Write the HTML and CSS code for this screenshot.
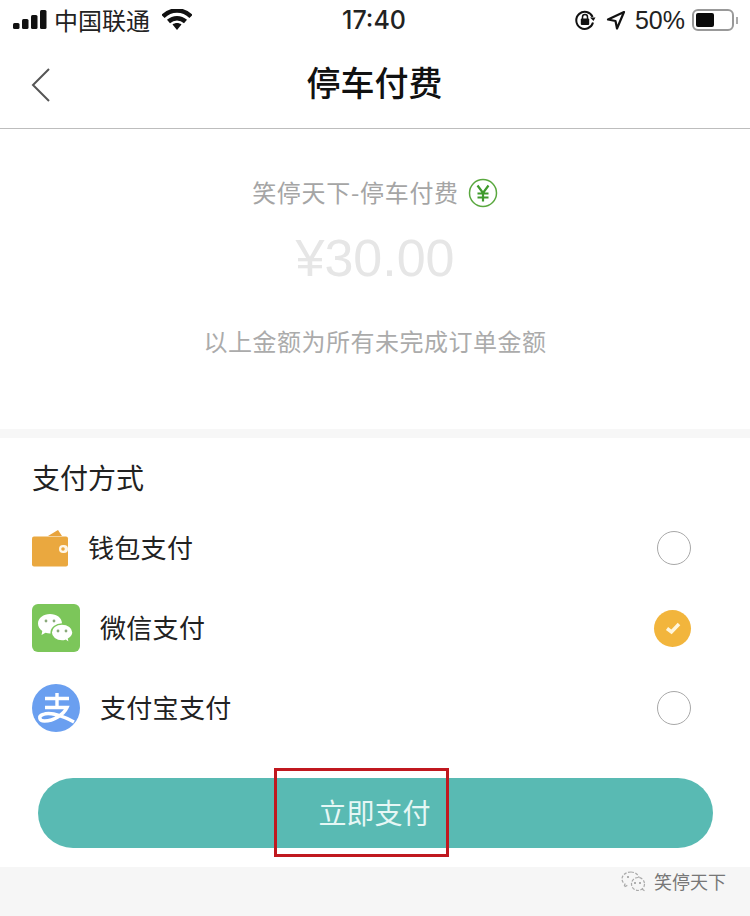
FILE: index.html
```html
<!DOCTYPE html>
<html lang="zh-CN">
<head>
<meta charset="utf-8">
<title>停车付费</title>
<link rel="stylesheet" href="styles.css">
</head>
<body>
<div class="page">
  <header class="status">
    <div class="status-left">
      <svg class="signal" width="34" height="20" viewBox="0 0 34 20"><rect x="0" y="13" width="6.500" height="6" rx="1.500"/><rect x="9" y="9" width="6.500" height="10" rx="1.500"/><rect x="18" y="5" width="6.500" height="14" rx="1.500"/><rect x="27" y="0" width="6.500" height="19" rx="1.500"/></svg>
      <span class="carrier">中国联通</span>
      <svg class="wifi" width="30" height="22" viewBox="0 0 30 22"><path d="M1 7.500C9 -.5 21 -.5 29 7.500" fill="none" stroke="#111" stroke-width="4.500"/><path d="M6.500 12.500C11.500 8 18.500 8 23.500 12.500" fill="none" stroke="#111" stroke-width="4.500"/><path d="M10.500 15.500C13 13.500 17 13.500 19.500 15.500L15 21Z" fill="#111"/></svg>
    </div>
    <div class="time">17:40</div>
    <div class="status-right">
      <svg class="lock" width="22" height="22" viewBox="0 0 22 22"><path d="M18.600 8A8.500 8.500 0 1 0 19 13.500" fill="none" stroke="#111" stroke-width="2"/><path d="M16 8.500h5.500L19.500 12Z" fill="#111"/><rect x="6.800" y="9.500" width="8.400" height="6.500" rx="1" fill="#111"/><path d="M8.500 10V8a2.500 2.500 0 0 1 5 0v2" fill="none" stroke="#111" stroke-width="1.500"/></svg>
      <svg class="arrow" width="20" height="20" viewBox="0 0 20 20"><path d="M18 2 2 9.500l7.500 1.500L11 18.500Z" fill="none" stroke="#111" stroke-width="2.200" stroke-linejoin="round"/></svg>
      <span class="percent">50%</span>
      <div class="battery"><div class="battery-fill"></div></div>
      <div class="battery-cap"></div>
    </div>
  </header>

  <nav class="nav">
    <svg class="back" width="20" height="34" viewBox="0 0 20 34"><path d="M18 1 2 17l16 16" fill="none" stroke="#555" stroke-width="2"/></svg>
    <h1 class="title">停车付费</h1>
  </nav>

  <section class="summary">
    <div class="merchant">
      <span class="merchant-name">笑停天下-停车付费</span>
      <svg class="yuan" width="30" height="30" viewBox="0 0 30 30"><circle cx="15" cy="15" r="13.500" fill="none" stroke="#5aa83f" stroke-width="1.500"/><path d="M9.500 7.500 15 15l5.500-7.500M15 15v8.500M9.500 15.500h11M9.500 19.500h11" fill="none" stroke="#3f9a2c" stroke-width="2.200"/></svg>
    </div>
    <div class="amount">¥30.00</div>
    <div class="note">以上金额为所有未完成订单金额</div>
  </section>

  <section class="methods">
    <h2 class="methods-title">支付方式</h2>

    <div class="method">
      <svg class="wallet" width="37" height="37" viewBox="0 0 37 37"><path d="M16 6 26 0l4 6Z" fill="#e8a33c"/><rect x="0" y="6.500" width="36" height="30" rx="2" fill="#eaa83f"/><rect x="27" y="15" width="9" height="8" rx="4" fill="#fff6e6"/><circle cx="31" cy="19" r="1.800" fill="#eaa83f"/></svg>
      <span class="method-name">钱包支付</span>
      <span class="radio"></span>
    </div>

    <div class="method">
      <svg class="brand" width="48" height="48" viewBox="0 0 48 48"><rect width="48" height="48" rx="6" fill="#7cc65a"/><path d="M18 10C11.500 10 6 14 6 19.500c0 3.100 1.700 5.700 4.300 7.500L9.500 31l4-2.300c1.500.5 3 .7 4.500.7 6.500 0 12-4 12-9.900S24.500 10 18 10Z" fill="#fff"/><path d="M30 20c-6 0-10.800 3.800-10.800 8.500S24 37 30 37c1.300 0 2.500-.2 3.600-.6L37.500 39l-.9-4.100c2.700-1.600 4.400-3.700 4.400-6.400 0-4.700-5-8.500-11-8.500Z" fill="#fff" stroke="#7cc65a" stroke-width="1.500"/><circle cx="14" cy="17" r="1.400" fill="#8aa97a"/><circle cx="22" cy="17" r="1.400" fill="#8aa97a"/><circle cx="26" cy="27" r="1.400" fill="#8aa97a"/><circle cx="34" cy="27" r="1.400" fill="#8aa97a"/></svg>
      <span class="method-name">微信支付</span>
      <span class="radio radio-on"><svg width="16" height="14" viewBox="0 0 16 14"><path d="M2 7.500 6.500 11 14 3" fill="none" stroke="#fff6dc" stroke-width="3.500"/></svg></span>
    </div>

    <div class="method">
      <svg class="brand" width="48" height="48" viewBox="0 0 48 48"><circle cx="24" cy="24" r="24" fill="#6a9ff0"/><path d="M13 14.500H37M25 9V23.500M13 23.500H35C32 30 22 37 12.500 37 7 37 6 32 11 30.500 17 28 29 31 42 38" fill="none" stroke="#fff" stroke-width="3.400"/></svg>
      <span class="method-name">支付宝支付</span>
      <span class="radio"></span>
    </div>

    <div class="pay-wrap">
      <button class="pay">立即支付</button>
    </div>
  </section>

  <footer class="foot"></footer>

  <div class="highlight"></div>
  <div class="watermark">
    <svg width="28" height="22" viewBox="0 0 28 22"><g fill="none" stroke="#aaa" stroke-width="1.200" stroke-dasharray="3 1.500"><path d="M11 2C6 2 2 5 2 9c0 2 1 4 3 5l-1 3 4-2"/><path d="M11 2c4 0 8 3 8 6"/><circle cx="18" cy="14" r="6.500"/><path d="M22 19l3 2"/></g><circle cx="8" cy="7" r="1" fill="#999"/><circle cx="15" cy="13" r="1" fill="#999"/><circle cx="20" cy="13" r="1" fill="#999"/></svg>
    <span>笑停天下</span>
  </div>
</div>
</body>
</html>
```

FILE: styles.css
```css
* {
  box-sizing: border-box;
}

html,
body {
  margin: 0;
  padding: 0;
  background: #fff;
}

.page {
  position: relative;
  width: 750px;
  height: 916px;
  overflow: hidden;
  font-family: "Noto Sans CJK SC", "Liberation Sans", sans-serif;
  color: #1a1a1a;
  background: #fff;
}

.status {
  position: relative;
  display: flex;
  align-items: center;
  justify-content: space-between;
  height: 40px;
  padding: 0 12px 0 13px;
}

.status-left,
.status-right {
  display: flex;
  align-items: center;
}

.signal {
  fill: #111;
  margin-right: 7px;
}

.carrier {
  font-size: 24px;
  line-height: 40px;
  color: #222;
}

.wifi {
  margin-left: 12px;
}

.time {
  position: absolute;
  left: 342px;
  top: 0;
  font-family: Inter, "Liberation Sans", sans-serif;
  font-size: 25px;
  font-weight: 500;
  line-height: 41px;
  color: #222;
}

.lock {
  margin-right: 10px;
}

.arrow {
  margin-right: 9px;
}

.percent {
  font-family: "Liberation Sans", sans-serif;
  font-size: 25px;
  line-height: 40px;
  color: #222;
  margin-right: 7px;
}

.battery {
  width: 42px;
  height: 22px;
  padding: 2px;
  border: 2px solid #999;
  border-radius: 6px;
}

.battery-fill {
  width: 18px;
  height: 14px;
  border-radius: 2px;
  background: #0a0a0a;
}

.battery-cap {
  width: 2px;
  height: 7px;
  margin-left: 2px;
  background: #aaa;
}

.nav {
  position: relative;
  display: flex;
  align-items: center;
  justify-content: center;
  height: 89px;
  padding-bottom: 4px;
  border-bottom: 1px solid #bdbdbd;
}

.back {
  position: absolute;
  left: 31px;
  top: 28px;
}

.title {
  margin: 0 0 0 -1px;
  font-size: 34px;
  font-weight: 500;
  line-height: 1.2;
  color: #111;
}

.summary {
  display: flex;
  flex-direction: column;
  align-items: center;
  height: 309px;
  border-bottom: 9px solid #f7f7f7;
}

.merchant {
  display: flex;
  align-items: center;
  gap: 9px;
  margin-top: 47px;
  height: 34px;
  font-size: 24px;
  color: #a5a5a5;
}

.merchant-name {
  margin-bottom: 4px;
  letter-spacing: 0.7px;
}

.amount {
  margin-top: 18px;
  font-family: "Liberation Sans", sans-serif;
  font-size: 52px;
  line-height: 60px;
  color: #e6e6e6;
}

.note {
  margin-top: 35px;
  font-size: 24px;
  letter-spacing: 0.5px;
  line-height: 36px;
  color: #ababab;
}

.methods {
  height: 429px;
  padding: 0 32px;
}

.methods-title {
  margin: 0;
  padding: 19px 0 11px;
  font-size: 28px;
  font-weight: 400;
  line-height: 40px;
  color: #222;
}

.method {
  display: flex;
  align-items: center;
  height: 80px;
}

.wallet {
  margin-right: 19px;
}

.brand {
  margin-right: 20px;
}

.method-name {
  margin-bottom: 2px;
  font-size: 26px;
  letter-spacing: 0.3px;
  line-height: 40px;
  color: #222;
}

.radio {
  display: flex;
  align-items: center;
  justify-content: center;
  width: 34px;
  height: 34px;
  margin-left: auto;
  margin-right: 27px;
  border: 1px solid #a8a8a8;
  border-radius: 50%;
}

.radio-on {
  width: 37px;
  height: 37px;
  border: 0;
  background: #f2b53c;
}

.pay-wrap {
  padding: 30px 5px 0 6px;
}

.pay {
  display: block;
  width: 100%;
  height: 70px;
  padding: 0 2px 2px 0;
  border: 0;
  border-radius: 35px;
  font-family: inherit;
  font-size: 28px;
  color: #e6f7f5;
  background: #59bab3;
}

.foot {
  height: 49px;
  background: #f6f6f6;
}

.highlight {
  position: absolute;
  left: 274px;
  top: 768px;
  width: 175px;
  height: 89px;
  border: 3px solid #c0181f;
}

.watermark {
  position: absolute;
  left: 620px;
  top: 867px;
  display: flex;
  align-items: center;
  gap: 6px;
  font-size: 18px;
  line-height: 28px;
  color: #777;
}
```
